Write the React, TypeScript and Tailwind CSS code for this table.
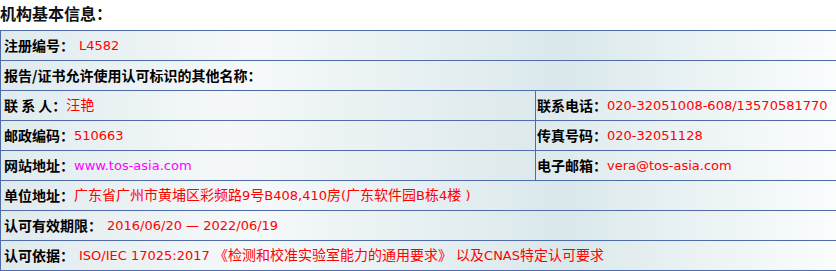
import React from "react";

const cjk = "font-['Noto_Sans_CJK_SC',sans-serif]";
const val = "font-['DejaVu_Sans','Noto_Sans_CJK_SC',sans-serif] text-[13px] text-[#ff0000]";

const fullBg =
  "bg-[linear-gradient(to_right,#dfeaed_0%,#f6f9fa_30%,#dae8eb_67%,#fbfdfd_100%)]";
const leftBg =
  "bg-[linear-gradient(to_right,#dfebee_0%,#f5f8f9_42%,#dde9ec_100%)]";
const rightBg = "bg-[linear-gradient(to_right,#dde9ec_0%,#fbfdfd_100%)]";

// latin runs stay at 13px, chinese runs are a touch larger like the original page
function Mixed({ text }: { text: string }) {
  const parts = text.split(/([\u3000-\u303f\u4e00-\u9fff\uff00-\uffef]+)/);
  return (
    <>
      {parts.map((p, i) =>
        i % 2 === 1 ? (
          <span key={i} className="text-[14px]">
            {p}
          </span>
        ) : (
          <React.Fragment key={i}>{p}</React.Fragment>
        )
      )}
    </>
  );
}

function Label({ children }: { children: React.ReactNode }) {
  return <span className={`${cjk} text-[14px] font-bold text-black`}>{children}</span>;
}

function Value({ text, className = "" }: { text: string; className?: string }) {
  return (
    <span className={`${val} ${className}`}>
      <Mixed text={text} />
    </span>
  );
}

function FullRow({ children }: { children: React.ReactNode }) {
  return (
    <div className={`flex h-[30px] items-center border-b border-[#4f6ca8] pl-[3px] ${fullBg}`}>
      {children}
    </div>
  );
}

function SplitRow({ left, right }: { left: React.ReactNode; right: React.ReactNode }) {
  return (
    <div className="flex h-[30px] border-b border-[#4f6ca8]">
      <div className={`flex w-[534px] items-center pl-[3px] ${leftBg}`}>{left}</div>
      <div className={`flex flex-1 items-center border-l border-[#4f6ca8] pl-[1px] ${rightBg}`}>
        {right}
      </div>
    </div>
  );
}

export default function App() {
  return (
    <div className="w-[836px] h-[271px] overflow-hidden bg-white">
      <div className={`${cjk} h-[30px] text-[16px] font-bold leading-[26px] text-[#111]`}>
        机构基本信息：
      </div>
      <div className="w-[840px] border-l border-t border-[#4f6ca8] whitespace-nowrap">
        <FullRow>
          <Label>注册编号：</Label>
          <Value className="ml-[5px]" text="L4582" />
        </FullRow>
        <FullRow>
          <Label>报告/证书允许使用认可标识的其他名称：</Label>
        </FullRow>
        <SplitRow
          left={
            <>
              <Label>联&nbsp;系&nbsp;人：</Label>
              <Value text="汪艳" />
            </>
          }
          right={
            <>
              <Label>联系电话：</Label>
              <Value text="020-32051008-608/13570581770" />
            </>
          }
        />
        <SplitRow
          left={
            <>
              <Label>邮政编码：</Label>
              <Value text="510663" />
            </>
          }
          right={
            <>
              <Label>传真号码：</Label>
              <Value text="020-32051128" />
            </>
          }
        />
        <SplitRow
          left={
            <>
              <Label>网站地址：</Label>
              <Value className="!text-[#ff00ff]" text="www.tos-asia.com" />
            </>
          }
          right={
            <>
              <Label>电子邮箱：</Label>
              <Value text="vera@tos-asia.com" />
            </>
          }
        />
        <FullRow>
          <Label>单位地址：</Label>
          <Value text="广东省广州市黄埔区彩频路9号B408,410房(广东软件园B栋4楼 )" />
        </FullRow>
        <FullRow>
          <Label>认可有效期限：</Label>
          <Value className="ml-[5px]" text="2016/06/20 — 2022/06/19" />
        </FullRow>
        <FullRow>
          <Label>认可依据：</Label>
          <Value
            className="ml-[5px]"
            text="ISO/IEC 17025:2017 《检测和校准实验室能力的通用要求》 以及CNAS特定认可要求"
          />
        </FullRow>
      </div>
    </div>
  );
}
